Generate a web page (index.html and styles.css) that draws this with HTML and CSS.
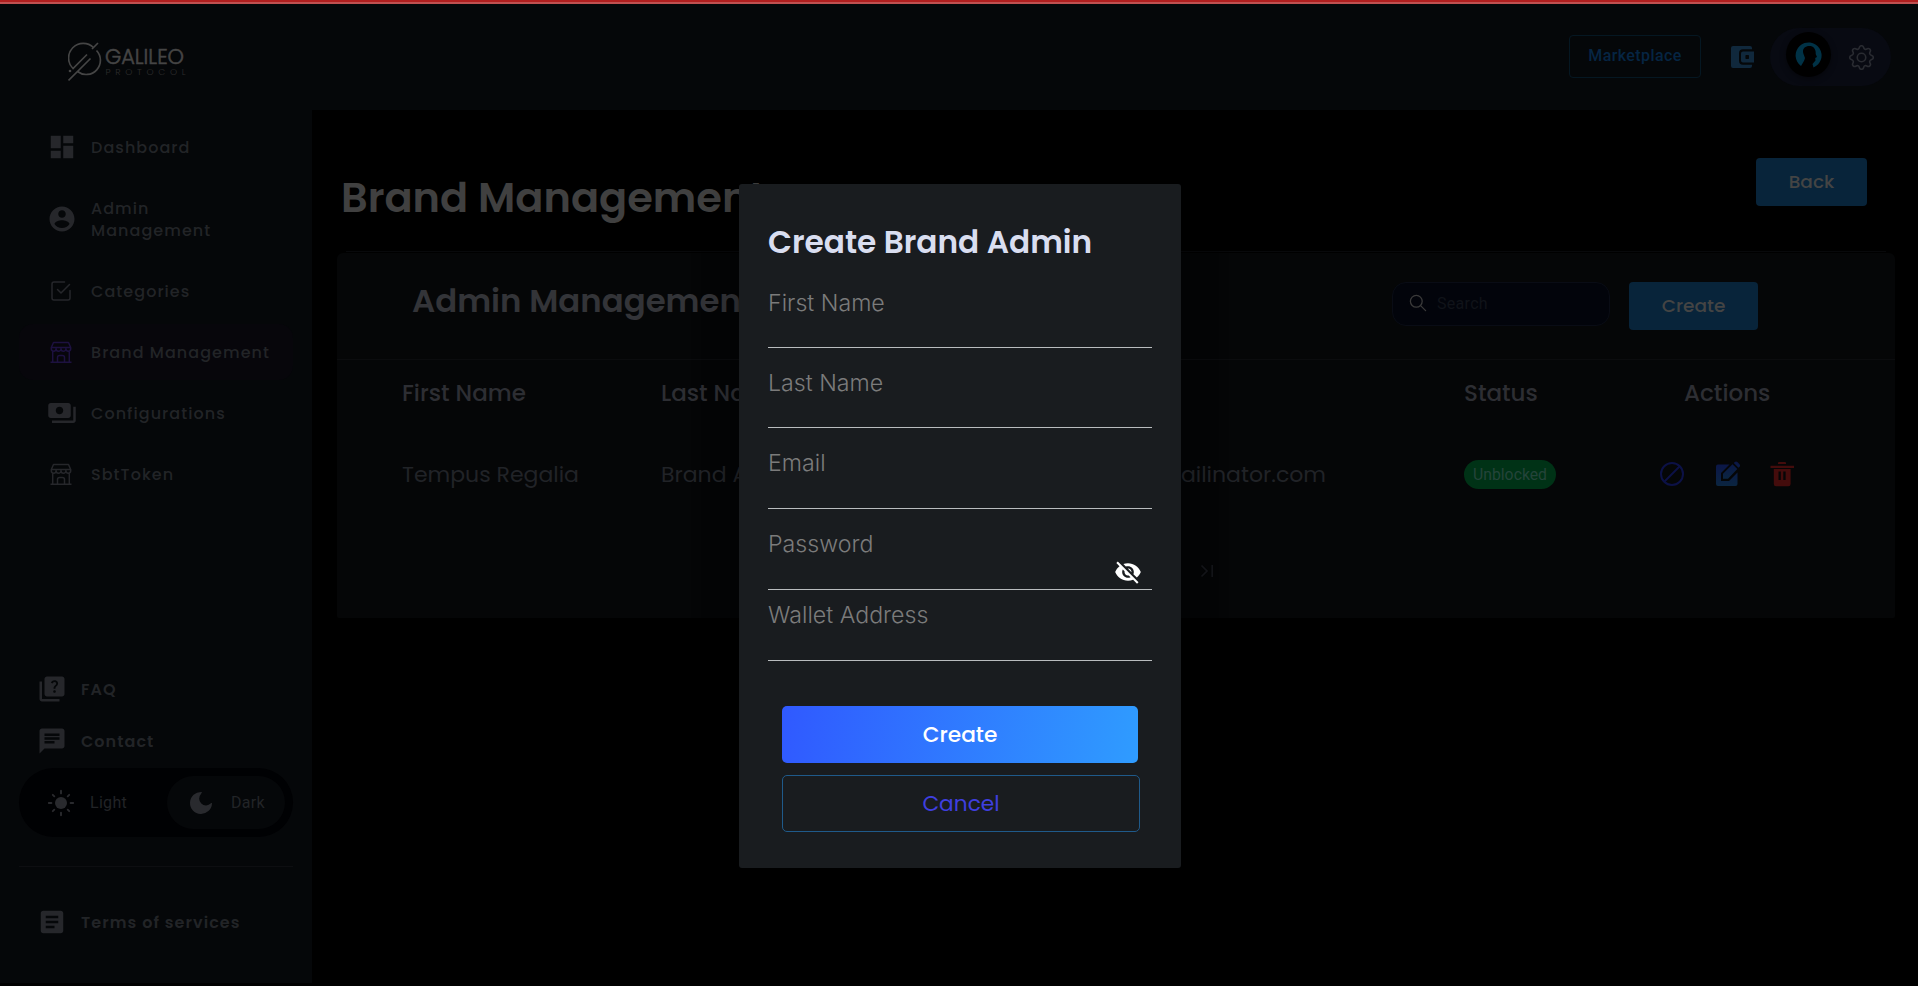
FILE: index.html
```html
<!DOCTYPE html>
<html lang="en">
<head>
<meta charset="utf-8">
<title>Brand Management</title>
<link rel="stylesheet" href="styles.css">
</head>
<body>
<div class="progress"></div>
<div class="app">
  <header class="header">
    <svg class="logo" width="122" height="42" viewBox="0 0 122 42">
      <g fill="none" stroke="currentColor" stroke-width="1.7">
        <path d="M25.500 6.500A14.200 14.200 0 0 0 5 27.500L19 13.500M28.500 9.500A14.200 14.200 0 0 1 9.500 30.500M0.500 39.500L22.500 17.500M24 8L30 2"/>
      </g>
      <circle cx="2" cy="30" r="1.300" fill="currentColor"/>
      <text class="logo-name" x="37" y="22.500" textLength="79" lengthAdjust="spacingAndGlyphs">GALILEO</text>
      <text class="logo-sub" x="37.500" y="33.500" textLength="80">PROTOCOL</text>
    </svg>
    <div class="header-actions">
      <a class="market">Marketplace</a>
      <svg class="wallet" width="24" height="24" viewBox="0 0 24 24"><path fill="currentColor" d="M3 1h17a2 2 0 0 1 2 2v1.300H13a4 4 0 0 0-4 4v7.400a4 4 0 0 0 4 4h9V21a2 2 0 0 1-2 2H3a2 2 0 0 1-2-2V3a2 2 0 0 1 2-2z"/><path fill="currentColor" fill-rule="evenodd" d="M13 6.400h11v11.200H13a2 2 0 0 1-2-2V8.400a2 2 0 0 1 2-2zM16.200 10a.8.8 0 0 0-.8.8v2.400a.8.800 0 0 0 .8.8h2a.8.800 0 0 0 .8-.8v-2.400a.8.800 0 0 0-.8-.8z"/></svg>
      <div class="profile">
        <span class="avatar"><svg width="30" height="30" viewBox="0 0 30 30"><path fill="#003246" d="M7 26A13 13 0 1 1 19.500 27.500L18.500 24l3-3.500-.3-2.500 1.800-1-1.300-3C22 9 19.500 6 15.500 6c-5.500 0-7.500 4-6 8l1.500 4c-.5 3-2.500 5-4 8z"/></svg></span>
        <svg class="gear" width="25" height="25" viewBox="-.5 -.5 17 17" fill="none" stroke="currentColor" stroke-width="1.100"><circle cx="8" cy="8" r="2.900"/><path d="M9.405 1.050c-.413-1.400-2.397-1.400-2.810 0l-.1.340a1.464 1.464 0 0 1-2.105.872l-.31-.17c-1.283-.698-2.686.705-1.987 1.987l.169.311c.446.820.023 1.841-.872 2.105l-.34.100c-1.400.413-1.400 2.397 0 2.810l.34.100a1.464 1.464 0 0 1 .872 2.105l-.17.310c-.698 1.283.705 2.686 1.987 1.987l.311-.169a1.464 1.464 0 0 1 2.105.872l.1.340c.413 1.400 2.397 1.400 2.810 0l.1-.34a1.464 1.464 0 0 1 2.105-.872l.31.170c1.283.698 2.686-.705 1.987-1.987l-.169-.311a1.464 1.464 0 0 1 .872-2.105l.34-.1c1.400-.413 1.400-2.397 0-2.810l-.34-.1a1.464 1.464 0 0 1-.872-2.105l.17-.31c.698-1.283-.705-2.686-1.987-1.987l-.311.169a1.464 1.464 0 0 1-2.105-.872z"/></svg>
      </div>
    </div>
  </header>

  <aside class="sidebar">
    <nav class="nav">
      <a class="nav-item"><svg width="30" height="30" viewBox="0 0 24 24"><path fill="currentColor" d="M3 13h8V3H3v10zm0 8h8v-6H3v6zm10 0h8V11h-8v10zm0-18v6h8V3h-8z"/></svg><span>Dashboard</span></a>
      <a class="nav-item"><svg width="30" height="30" viewBox="0 0 24 24"><path fill="currentColor" d="M12 2C6.480 2 2 6.480 2 12s4.480 10 10 10 10-4.480 10-10S17.520 2 12 2zm0 3c1.660 0 3 1.340 3 3s-1.340 3-3 3-3-1.340-3-3 1.340-3 3-3zm0 14.200c-2.500 0-4.710-1.280-6-3.220.03-1.990 4-3.080 6-3.080 1.990 0 5.970 1.090 6 3.080-1.290 1.940-3.500 3.220-6 3.220z"/></svg><span>Admin<br>Management</span></a>
      <a class="nav-item"><svg class="small" width="22" height="22" viewBox="0 0 22 22" fill="none" stroke="currentColor" stroke-width="1.500" stroke-linecap="round" stroke-linejoin="round"><path d="M14.500 2H4a2 2 0 0 0-2 2v14a2 2 0 0 0 2 2h14a2 2 0 0 0 2-2v-7.500M7.500 9.500l3.500 3.500L19.500 4.500"/></svg><span>Categories</span></a>
      <a class="nav-item active"><svg class="small" width="22" height="22" viewBox="0 0 22 22"><use href="#shop"/></svg><span>Brand Management</span></a>
      <a class="nav-item"><svg width="30" height="30" viewBox="0 0 24 24"><path fill="currentColor" d="M19 14V6c0-1.100-.9-2-2-2H3c-1.100 0-2 .9-2 2v8c0 1.100.9 2 2 2h14c1.100 0 2-.9 2-2zm-9-1c-1.660 0-3-1.340-3-3s1.340-3 3-3 3 1.340 3 3-1.340 3-3 3zm13-6v11c0 1.100-.9 2-2 2H4v-2h17V7h2z"/></svg><span>Configurations</span></a>
      <a class="nav-item"><svg class="small" width="22" height="22" viewBox="0 0 22 22"><g id="shop" fill="none" stroke="currentColor" stroke-width="1.500" stroke-linejoin="round"><path d="M.5 21.200h21M2.700 10v11M19.300 10v11M7.500 21v-4.500a2 2 0 0 1 2-2h3a2 2 0 0 1 2 2V21M1.300 6.500L3.500 1.500h15l2.200 5zM1.300 6.500v1.300a2.400 2.400 0 0 0 4.800 0 2.400 2.400 0 0 0 4.900 0 2.400 2.400 0 0 0 4.900 0 2.400 2.400 0 0 0 4.800 0V6.500"/></g></svg><span>SbtToken</span></a>
    </nav>
    <div class="side-bottom">
      <a class="side-link"><svg width="30" height="30" viewBox="0 0 24 24"><path fill="currentColor" d="M4 6H2v14c0 1.100.9 2 2 2h14v-2H4V6zm16-4H8c-1.100 0-2 .9-2 2v12c0 1.100.9 2 2 2h12c1.100 0 2-.9 2-2V4c0-1.100-.9-2-2-2zm-5.990 13c-.59 0-1.050-.47-1.050-1.050 0-.59.470-1.040 1.050-1.040.59 0 1.040.45 1.040 1.040-.01.580-.45 1.050-1.040 1.050zm2.500-6.170c-.63.930-1.230 1.210-1.560 1.810-.13.240-.18.400-.18 1.180h-1.520c0-.41-.06-1.080.26-1.650.41-.73 1.180-1.160 1.630-1.800.48-.68.210-1.940-1.140-1.940-.88 0-1.320.670-1.500 1.230l-1.370-.57C11.510 5.960 12.520 5 13.990 5c1.230 0 2.080.560 2.510 1.260.37.600.58 1.730.01 2.570z"/></svg><span>FAQ</span></a>
      <a class="side-link"><svg width="30" height="30" viewBox="0 0 24 24"><path fill="currentColor" d="M20 2H4c-1.100 0-1.990.9-1.990 2L2 22l4-4h14c1.100 0 2-.9 2-2V4c0-1.100-.9-2-2-2zM6 9h12v2H6V9zm8 5H6v-2h8v2zm4-6H6V6h12v2z"/></svg><span>Contact</span></a>
      <div class="theme">
        <span class="theme-opt"><svg width="28" height="28" viewBox="0 0 28 28"><circle cx="14" cy="14" r="6" fill="currentColor"/><path stroke="currentColor" stroke-width="1.900" stroke-linecap="round" d="M14 1.800v2.600M14 23.600v2.600M1.800 14h2.600M23.600 14h2.600M5.800 5.800l1.500 1.500M20.700 20.700l1.500 1.500M5.800 22.200l1.500-1.500M20.700 7.300l1.500-1.500"/></svg>Light</span>
        <span class="theme-opt dark"><svg width="24" height="24" viewBox="0 0 24 24"><path fill="currentColor" d="M12.500 1A11 11 0 1 0 23 12.500c0-.5-.7-.6-1.100-.2A6.200 6.200 0 0 1 12 3c.3-.8.9-1.300.9-1.500s-.1-.5-.4-.5z"/></svg>Dark</span>
      </div>
      <hr class="rule">
      <a class="side-link terms"><svg width="30" height="30" viewBox="0 0 24 24"><path fill="currentColor" d="M19 3H5c-1.100 0-2 .9-2 2v14c0 1.100.9 2 2 2h14c1.100 0 2-.9 2-2V5c0-1.100-.9-2-2-2zm-5 14H7v-2h7v2zm3-4H7v-2h10v2zm0-4H7V7h10v2z"/></svg><span>Terms of services</span></a>
    </div>
  </aside>

  <main class="main">
    <div class="page-head">
      <h1 class="page-title">Brand Management</h1>
      <a class="btn back">Back</a>
    </div>
    <div class="card-edge"></div>
    <section class="card">
      <div class="card-head">
        <h2 class="card-title">Admin Management</h2>
        <div class="search"><svg width="18" height="18" viewBox="0 0 18 18" fill="none" stroke="currentColor" stroke-width="1.300" stroke-linecap="round"><circle cx="7.300" cy="7.300" r="5.900"/><path d="M11.600 11.600l5 5"/></svg><span>Search</span></div>
        <a class="btn create">Create</a>
      </div>
      <div class="row row-head">
        <span>First Name</span><span>Last Name</span><span></span><span>Status</span><span>Actions</span>
      </div>
      <div class="row">
        <span>Tempus Regalia</span><span>Brand Admin</span><span class="email">mailinator.com</span>
        <span><b class="badge">Unblocked</b></span>
        <span class="icons">
          <svg width="26" height="26" viewBox="0 0 26 26" fill="none" stroke="#0c1146" stroke-width="2"><circle cx="13" cy="13" r="11"/><path d="M5.500 20.500l15-15"/></svg>
          <svg width="26" height="26" viewBox="0 0 26 26"><defs><linearGradient id="ed" x1="0" y1="0" x2="0" y2="1"><stop offset="0" stop-color="#0b1648"/><stop offset="1" stop-color="#0b2540"/></linearGradient></defs><path fill="url(#ed)" d="M3 3.500h11.500L6 12v8h8l8.500-8.500V23a2 2 0 0 1-2 2H3a2 2 0 0 1-2-2V5.500a2 2 0 0 1 2-2z"/><path fill="url(#ed)" d="M8 17.800v-5L17.500 3.300l4.800 4.800L13 17.800zM18.800 2l1-1a1.800 1.800 0 0 1 2.500 0L24.500 3.300a1.800 1.800 0 0 1 0 2.500l-1 1z"/></svg>
          <svg class="trash" width="24" height="26" viewBox="0 0 24 26"><path fill="#440c0c" fill-rule="evenodd" d="M9 1h6a1 1 0 0 1 1 1v1H8V2a1 1 0 0 1 1-1zM.5 4.800h23.500v2.200H.5zM3.800 8h16.800v15a2.200 2.200 0 0 1-2.200 2.200H6A2.200 2.200 0 0 1 3.800 23zM8.500 10.500v8.500h2.300v-8.500zM13.300 10.500v8.500h2.300v-8.500z"/></svg>
        </span>
      </div>
      <div class="pager"><svg width="14" height="14" viewBox="0 0 14 14" fill="none" stroke="currentColor" stroke-width="1.700"><path d="M1.500 1.500L7 7l-5.500 5.500M12.200 1v12"/></svg></div>
    </section>
  </main>
</div>

<div class="modal">
  <h2 class="modal-title">Create Brand Admin</h2>
  <label class="field">First Name</label>
  <label class="field">Last Name</label>
  <label class="field third">Email</label>
  <label class="field third">Password<svg class="eye" width="28" height="28" viewBox="0 0 24 24"><path fill="currentColor" d="M12 7c2.760 0 5 2.240 5 5 0 .65-.13 1.260-.36 1.830l2.920 2.920c1.510-1.260 2.700-2.890 3.430-4.750-1.730-4.390-6-7.500-11-7.500-1.400 0-2.740.25-3.980.7l2.160 2.160C10.740 7.130 11.350 7 12 7zM2 4.270l2.280 2.280.46.460C3.080 8.300 1.780 10.020 1 12c1.730 4.390 6 7.500 11 7.500 1.550 0 3.030-.3 4.380-.84l.42.420L19.730 22 21 20.730 3.270 3 2 4.270zM7.530 9.800l1.550 1.550c-.05.210-.08.430-.08.650 0 1.660 1.340 3 3 3 .22 0 .44-.03.650-.08l1.550 1.550c-.67.330-1.410.53-2.200.53-2.760 0-5-2.240-5-5 0-.79.200-1.530.53-2.200zm4.310-.78l3.150 3.150.02-.16c0-1.660-1.340-3-3-3l-.17.010z"/></svg></label>
  <label class="field last">Wallet Address</label>
  <button class="submit">Create</button>
  <button class="cancel">Cancel</button>
</div>
</body>
</html>
```
FILE: styles.css
```css
* { box-sizing: border-box; }
body { margin: 0; background: #000; overflow: hidden; font-family: Poppins, Inter, "Open Sans", sans-serif; }
svg { display: block; flex: none; }
.progress { position: absolute; z-index: 3; top: 0; left: 0; width: 100%; height: 4px; background: #b01e1e; border-bottom: 2px solid #bf5050; }

.app { display: grid; grid-template: 110px 873px / 312px 1fr; }
.header { grid-column: 1 / 3; background: #050709; display: flex; align-items: center; justify-content: space-between; padding: 4px 27px 0 68px; }
.logo { color: #454545; margin-top: 9px; }
.logo-name { font: 300 22px Poppins, Inter, sans-serif; fill: #454545; stroke: #454545; stroke-width: .6; }
.logo-sub { font: 300 9px Poppins, Inter, sans-serif; fill: #2d2d2d; }
.header-actions { display: flex; align-items: center; }
.market { width: 132px; height: 43px; border: 1px solid #051722; border-radius: 4px; color: #062543; font: 500 16px/40px Roboto, sans-serif; letter-spacing: .4px; text-align: center; margin: -1px 29px 0 0; }
.wallet { color: #10283c; margin: -1px 16px 0 0; }
.profile { width: 121px; height: 58px; border-radius: 29px; background: #080a12; display: flex; align-items: center; justify-content: space-between; padding: 0 17px 0 16px; }
.avatar { width: 45px; height: 45px; border-radius: 50%; background: #000; display: flex; align-items: center; justify-content: center; margin-top: -5px; box-shadow: 0 2px 6px #0006; }
.gear { color: #292b31; }

.sidebar { background: #050709; padding: 9px 19px 0; color: #26272b; display: flex; flex-direction: column; justify-content: space-between; }
.nav { display: flex; flex-direction: column; gap: 5px; }
.nav-item { display: flex; align-items: center; min-height: 56px; padding: 17px 0 17px 28px; border-radius: 14px; font-weight: 500; font-size: 16px; line-height: 22px; letter-spacing: 1.050px; }
.nav-item svg { margin: -4px 14px -4px 0; }
.nav-item .small { margin: 0 19px 0 3px; }
.nav-item.active { background: #07060b; }
.nav-item.active svg { color: #1d1140; }
.nav-item span, .side-link span { color: #222427; }
.nav-item span { position: relative; top: 1px; }
.side-link { display: flex; align-items: center; gap: 14px; height: 52px; padding-left: 18px; font-weight: 600; font-size: 16px; letter-spacing: 1.050px; }
.theme { display: flex; justify-content: space-between; align-items: center; height: 69px; border-radius: 35px; background: #000103; padding: 0 8px 0 28px; margin-top: 1px; font: 16px Roboto, sans-serif; letter-spacing: .3px; color: #222427; }
.theme-opt { display: flex; align-items: center; gap: 15px; }
.theme-opt svg { color: #292a2e; }
.theme-opt.dark { width: 118px; height: 53px; border-radius: 27px; background: #050709; padding-left: 22px; gap: 18px; }
.rule { border: 0; border-top: 1px solid #0d0e11; margin: 29px 0; }
.terms { margin-bottom: 35px; }

.main { padding: 47px 23px 0 25px; }
.page-head { display: flex; justify-content: space-between; height: 94px; padding: 1px 28px 0 4px; }
.page-title { margin: 9px 0 0; font-weight: 600; font-size: 41.500px; line-height: 62px; color: #404040; white-space: nowrap; }
.btn { display: block; height: 48px; border-radius: 4px; background: #08243a; color: #444; font-weight: 500; font-size: 18.500px; text-align: center; line-height: 48px; }
.back { width: 111px; }
.card-edge { height: 1px; margin: 0 9px 1px; background: #08090b; }
.card { height: 365px; background: #050607; border-radius: 6px 6px 2px 2px; }
.card-head { display: flex; height: 107px; border-bottom: 1px solid #0b0c0e; padding-left: 75px; }
.card-title { margin: 23px auto 0 0; font-weight: 600; font-size: 32.400px; line-height: 49px; color: #333438; white-space: nowrap; }
.search { width: 218px; height: 44px; margin: 29px 19px 0 0; border: 1px solid #090c15; border-radius: 14px; background: #02040b; display: flex; align-items: center; gap: 10px; padding: 0 0 2px 16px; font: 16px Roboto, sans-serif; letter-spacing: .3px; color: #101319; }
.search svg { color: #3a3a3a; }
.create { width: 129px; margin: 29px 137px 0 0; }
.row { display: grid; grid-template-columns: 259px 260px 543px 220px 1fr; align-items: center; height: 96px; padding-left: 65px; font-size: 22px; color: #212327; white-space: nowrap; }
.row-head { height: 66px; font-weight: 500; font-size: 23px; color: #2d2e33; }
.email { width: 405px; text-align: right; }
.badge { display: block; width: 92px; height: 29px; border-radius: 15px; background: #003216; color: #24443a; font: 15.800px/29px Roboto, sans-serif; text-align: center; }
.icons { display: flex; align-items: center; gap: 30px; margin-left: -25px; }
.trash { margin-left: -1px; }
.pager { margin: 42px 0 0 863px; color: #15161a; }

.modal { position: absolute; left: 739px; top: 184px; width: 442px; height: 684px; padding: 34px 29px 0; border-radius: 3px; background: #191c1f; display: flex; flex-direction: column; box-shadow: 0 11px 15px -7px rgba(0,0,0,.2), 0 24px 38px 3px rgba(0,0,0,.14), 0 9px 46px 8px rgba(0,0,0,.12); }
.modal-title { margin: 0 0 16px; font-weight: 600; font-size: 31.200px; line-height: 48px; color: #d9def0; }
.field { position: relative; height: 66px; margin-bottom: 14px; border-bottom: 1px solid #b9bcbe; font: 300 23.200px/42px Inter, sans-serif; color: #7b7b7b; flex: none; }
.field.third { height: 67px; }
.field.last { height: 67px; margin: -10px 0 45px; }
.eye { position: absolute; right: 10px; bottom: 3px; color: #fff; }
button { font-family: inherit; font-size: 21.700px; height: 57px; border: 0; border-radius: 5px; padding: 0; margin: 0 14px; flex: none; }
.submit { background: linear-gradient(100deg, #3059ff, #2f9cff); color: #fff; font-weight: 500; }
.cancel { margin: 12px 12px 0 14px; background: none; border: 1px solid #1f5a8a; color: #3f3fdf; }
```
